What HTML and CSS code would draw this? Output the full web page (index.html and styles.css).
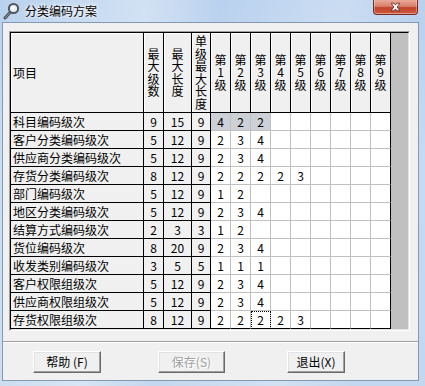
FILE: index.html
```html
<!DOCTYPE html>
<html lang="zh-CN">
<head>
<meta charset="utf-8">
<title>分类编码方案</title>
<link rel="stylesheet" href="styles.css">
</head>
<body>
<div class="titlebar">
  <svg class="icon" width="18" height="18" viewBox="0 0 18 18">
    <line x1="3" y1="16" x2="8.5" y2="10" stroke="#4a4f57" stroke-width="3" stroke-linecap="round"/>
    <line x1="3" y1="16" x2="8.5" y2="10" stroke="#9aa1ab" stroke-width="1"/>
    <circle cx="11.5" cy="6.5" r="4.6" fill="#e8eef5" stroke="#50565f" stroke-width="2"/>
    <circle cx="11" cy="6" r="2" fill="#ffffff" opacity="0.8"/>
  </svg>
  <span class="title">分类编码方案</span>
  <div class="close">
    <svg width="45" height="15" viewBox="0 0 45 15">
      <path d="M18 3 L21 3 L22.5 5 L24 3 L27 3 L24.3 7 L27 11 L24 11 L22.5 9 L21 11 L18 11 L20.7 7 Z" fill="#ffffff" stroke="#5a1a12" stroke-width="0.8" stroke-linejoin="round"/>
    </svg>
  </div>
</div>
<div class="client">
  <div class="grid-frame">
    <div class="grid-inner">
      <div class="grid">
        <div class="row head">
          <div class="cell hd item">项目</div>
          <div class="cell hd"><span class="vt">最大级数</span></div>
          <div class="cell hd"><span class="vt">最大长度</span></div>
          <div class="cell hd"><span class="vt">单级最大长度</span></div>
          <div class="cell hd"><span class="vt">第1级</span></div>
          <div class="cell hd"><span class="vt">第2级</span></div>
          <div class="cell hd"><span class="vt">第3级</span></div>
          <div class="cell hd"><span class="vt">第4级</span></div>
          <div class="cell hd"><span class="vt">第5级</span></div>
          <div class="cell hd"><span class="vt">第6级</span></div>
          <div class="cell hd"><span class="vt">第7级</span></div>
          <div class="cell hd"><span class="vt">第8级</span></div>
          <div class="cell hd"><span class="vt">第9级</span></div>
        </div>
        <div class="row">
          <div class="cell name">科目编码级次</div><div class="cell num">9</div><div class="cell num">15</div><div class="cell num">9</div>
          <div class="d sel">4</div><div class="d sel">2</div><div class="d sel">2</div><div class="d"></div><div class="d"></div><div class="d"></div><div class="d"></div><div class="d"></div><div class="d"></div>
        </div>
        <div class="row">
          <div class="cell name">客户分类编码级次</div><div class="cell num">5</div><div class="cell num">12</div><div class="cell num">9</div>
          <div class="d">2</div><div class="d">3</div><div class="d">4</div><div class="d"></div><div class="d"></div><div class="d"></div><div class="d"></div><div class="d"></div><div class="d"></div>
        </div>
        <div class="row">
          <div class="cell name">供应商分类编码级次</div><div class="cell num">5</div><div class="cell num">12</div><div class="cell num">9</div>
          <div class="d">2</div><div class="d">3</div><div class="d">4</div><div class="d"></div><div class="d"></div><div class="d"></div><div class="d"></div><div class="d"></div><div class="d"></div>
        </div>
        <div class="row">
          <div class="cell name">存货分类编码级次</div><div class="cell num">8</div><div class="cell num">12</div><div class="cell num">9</div>
          <div class="d">2</div><div class="d">2</div><div class="d">2</div><div class="d">2</div><div class="d">3</div><div class="d"></div><div class="d"></div><div class="d"></div><div class="d"></div>
        </div>
        <div class="row">
          <div class="cell name">部门编码级次</div><div class="cell num">5</div><div class="cell num">12</div><div class="cell num">9</div>
          <div class="d">1</div><div class="d">2</div><div class="d"></div><div class="d"></div><div class="d"></div><div class="d"></div><div class="d"></div><div class="d"></div><div class="d"></div>
        </div>
        <div class="row">
          <div class="cell name">地区分类编码级次</div><div class="cell num">5</div><div class="cell num">12</div><div class="cell num">9</div>
          <div class="d">2</div><div class="d">3</div><div class="d">4</div><div class="d"></div><div class="d"></div><div class="d"></div><div class="d"></div><div class="d"></div><div class="d"></div>
        </div>
        <div class="row">
          <div class="cell name">结算方式编码级次</div><div class="cell num">2</div><div class="cell num">3</div><div class="cell num">3</div>
          <div class="d">1</div><div class="d">2</div><div class="d"></div><div class="d"></div><div class="d"></div><div class="d"></div><div class="d"></div><div class="d"></div><div class="d"></div>
        </div>
        <div class="row">
          <div class="cell name">货位编码级次</div><div class="cell num">8</div><div class="cell num">20</div><div class="cell num">9</div>
          <div class="d">2</div><div class="d">3</div><div class="d">4</div><div class="d"></div><div class="d"></div><div class="d"></div><div class="d"></div><div class="d"></div><div class="d"></div>
        </div>
        <div class="row">
          <div class="cell name">收发类别编码级次</div><div class="cell num">3</div><div class="cell num">5</div><div class="cell num">5</div>
          <div class="d">1</div><div class="d">1</div><div class="d">1</div><div class="d"></div><div class="d"></div><div class="d"></div><div class="d"></div><div class="d"></div><div class="d"></div>
        </div>
        <div class="row">
          <div class="cell name">客户权限组级次</div><div class="cell num">5</div><div class="cell num">12</div><div class="cell num">9</div>
          <div class="d">2</div><div class="d">3</div><div class="d">4</div><div class="d"></div><div class="d"></div><div class="d"></div><div class="d"></div><div class="d"></div><div class="d"></div>
        </div>
        <div class="row">
          <div class="cell name">供应商权限组级次</div><div class="cell num">5</div><div class="cell num">12</div><div class="cell num">9</div>
          <div class="d">2</div><div class="d">3</div><div class="d">4</div><div class="d"></div><div class="d"></div><div class="d"></div><div class="d"></div><div class="d"></div><div class="d"></div>
        </div>
        <div class="row">
          <div class="cell name">存货权限组级次</div><div class="cell num">8</div><div class="cell num">12</div><div class="cell num">9</div>
          <div class="d">2</div><div class="d">2</div><div class="d focus">2</div><div class="d">2</div><div class="d">3</div><div class="d"></div><div class="d"></div><div class="d"></div><div class="d"></div>
        </div>
      </div>
    </div>
  </div>
  <div class="sep"></div>
  <div class="buttons">
    <button class="btn btn-help">帮助 (<u>F</u>)</button>
    <button class="btn btn-save" disabled>保存(<u>S</u>)</button>
    <button class="btn btn-exit">退出(<u>X</u>)</button>
  </div>
</div>
</body>
</html>
```
FILE: styles.css
```css
html, body {
  margin: 0;
}
body {
  width: 425px;
  height: 386px;
  box-sizing: border-box;
  padding: 0 6px 5px 2px;
  display: flex;
  flex-direction: column;
  overflow: hidden;
  font-family: "Noto Sans CJK SC", "Noto Sans", sans-serif;
  font-size: 12px;
  color: #000;
  background:
    linear-gradient(100deg, rgba(255,255,255,0) 0%, rgba(255,255,255,0.35) 30%, rgba(255,255,255,0) 45%, rgba(255,255,255,0.25) 70%, rgba(255,255,255,0) 85%),
    linear-gradient(to bottom, #b9d1ee 0%, #c6daf1 40%, #c3d7ee 100%);
}
.titlebar {
  height: 22px;
  display: flex;
  align-items: flex-start;
  flex: none;
}
.icon {
  margin-top: 2px;
  flex: none;
}
.title {
  margin-left: 5px;
  line-height: 22px;
  text-shadow: 0 0 5px #fff, 0 0 3px #fff;
}
.close {
  margin-left: auto;
  margin-right: 1px;
  width: 45px;
  height: 15px;
  box-sizing: border-box;
  border: 1px solid #7a2a20;
  border-top: none;
  border-radius: 0 0 4px 4px;
  background: linear-gradient(to bottom, #e9ab98 0%, #d7806a 45%, #c2432b 55%, #cf5a3c 100%);
  box-shadow: inset 0 -1px 0 rgba(255,255,255,0.4), inset 1px 0 0 rgba(255,255,255,0.3), inset -1px 0 0 rgba(255,255,255,0.3);
  display: flex;
}
.client {
  flex: 1;
  background: #f0f0f0;
  border: 1px solid #8598b2;
  display: flex;
  flex-direction: column;
}
.grid-frame {
  margin: 8px 0 0 6px;
  width: 401px;
  height: 300px;
  box-sizing: border-box;
  border: 1px solid;
  border-color: #a0a0a0 #ffffff #ffffff #a0a0a0;
}
.grid-inner {
  height: 100%;
  box-sizing: border-box;
  border: 1px solid;
  border-color: #000000 #e3e3e3 #e3e3e3 #000000;
  background: #c0c0c0;
}
.grid {
  width: 380px;
}
.row {
  display: grid;
  grid-template-columns: 133px 20px 28px 19px repeat(9, 20px);
  height: 18px;
}
.row.head {
  height: 80px;
}
.cell, .d {
  box-sizing: border-box;
  border-right: 1px solid #000;
  border-bottom: 1px solid #000;
  line-height: 17px;
  white-space: nowrap;
  overflow: hidden;
}
.cell {
  background: #f0f0f0;
}
.hd {
  display: flex;
  align-items: center;
  justify-content: center;
  box-shadow: inset 1px 1px 0 #ffffff;
}
.hd.item {
  justify-content: flex-start;
  padding-left: 2px;
}
.vt {
  width: 13px;
  white-space: normal;
  word-break: break-all;
  line-height: 12.5px;
  text-align: center;
}
.name {
  padding-left: 2px;
}
.num {
  text-align: center;
}
.d {
  background: #ffffff;
  border-right-color: #c0c0c0;
  border-bottom-color: #c0c0c0;
  text-align: center;
}
.d:last-child {
  border-right-color: #000;
}
.row:last-child .d {
  border-bottom-color: #000;
}
.d.sel {
  background: #cdd0d7;
}
.d.focus {
  outline: 1px dotted #000;
  outline-offset: -1px;
}
.sep {
  margin-top: 10px;
  height: 0;
  border-top: 1px solid #a0a0a0;
  border-bottom: 1px solid #ffffff;
}
.buttons {
  margin-top: 8px;
  display: flex;
}
.btn {
  height: 22px;
  box-sizing: border-box;
  padding: 0;
  font-family: "Noto Sans CJK SC", "Noto Sans", sans-serif;
  font-size: 12px;
  line-height: 18px;
  color: #000;
  background: #f0f0f0;
  border: 1px solid;
  border-color: #ffffff #696969 #696969 #ffffff;
  box-shadow: inset -1px -1px 0 #a0a0a0, inset 1px 1px 0 #e3e3e3;
}
.btn u {
  text-decoration: none;
}
.btn-help {
  margin-left: 30px;
  width: 68px;
}
.btn-save {
  margin-left: 57px;
  width: 67px;
  color: #a0a0a0;
  text-shadow: 1px 1px 0 #ffffff;
}
.btn-exit {
  margin-left: 62px;
  width: 58px;
}
```
